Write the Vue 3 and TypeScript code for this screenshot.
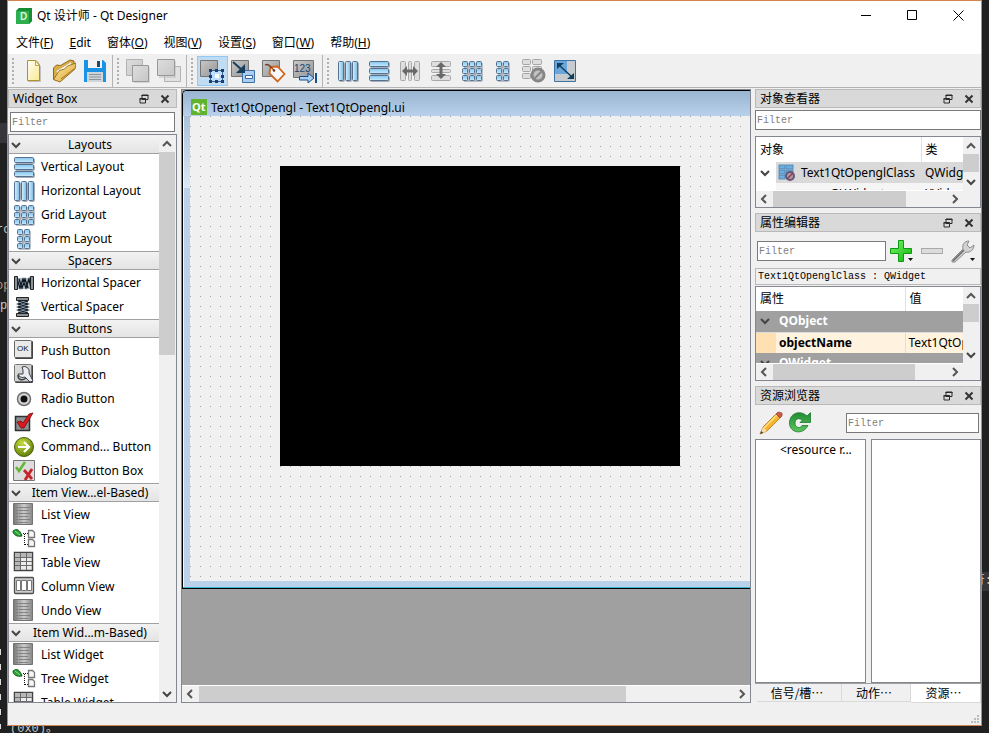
<script setup lang="ts">
import { ref } from 'vue'

interface MenuEntry { before: string; key: string; after: string }
interface ToolEntry { icon: string; label: string; caption?: string; active?: boolean; disabled?: boolean }
interface WidgetEntry { icon: string; name: string; caption?: string }
interface WidgetGroup { title: string; items: WidgetEntry[] }

const menus: MenuEntry[] = [
  { before: '文件(', key: 'F', after: ')' },
  { before: '', key: 'E', after: 'dit' },
  { before: '窗体(', key: 'O', after: ')' },
  { before: '视图(', key: 'V', after: ')' },
  { before: '设置(', key: 'S', after: ')' },
  { before: '窗口(', key: 'W', after: ')' },
  { before: '帮助(', key: 'H', after: ')' },
]

const toolbars: ToolEntry[][] = [
  [
    { icon: 'new', label: 'New' },
    { icon: 'open', label: 'Open' },
    { icon: 'save', label: 'Save' },
  ],
  [
    { icon: 'lower', label: 'Send to Back', disabled: true },
    { icon: 'raise', label: 'Bring to Front', disabled: true },
  ],
  [
    { icon: 'edit-widgets', label: 'Edit Widgets', active: true },
    { icon: 'edit-signals', label: 'Edit Signals/Slots' },
    { icon: 'edit-buddies', label: 'Edit Buddies' },
    { icon: 'edit-taborder', label: 'Edit Tab Order', caption: '123' },
  ],
  [
    { icon: 'hlayout', label: 'Lay Out Horizontally' },
    { icon: 'vlayout', label: 'Lay Out Vertically' },
    { icon: 'hsplit', label: 'Horizontal Splitter', disabled: true },
    { icon: 'vsplit', label: 'Vertical Splitter', disabled: true },
    { icon: 'grid', label: 'Lay Out in a Grid' },
    { icon: 'form', label: 'Lay Out in a Form' },
    { icon: 'break', label: 'Break Layout', disabled: true },
    { icon: 'adjust', label: 'Adjust Size' },
  ],
]

const groups: WidgetGroup[] = [
  {
    title: 'Layouts',
    items: [
      { icon: 'vlayout', name: 'Vertical Layout' },
      { icon: 'hlayout', name: 'Horizontal Layout' },
      { icon: 'grid', name: 'Grid Layout' },
      { icon: 'form', name: 'Form Layout' },
    ],
  },
  {
    title: 'Spacers',
    items: [
      { icon: 'hspacer', name: 'Horizontal Spacer' },
      { icon: 'vspacer', name: 'Vertical Spacer' },
    ],
  },
  {
    title: 'Buttons',
    items: [
      { icon: 'push', name: 'Push Button', caption: 'OK' },
      { icon: 'tool', name: 'Tool Button' },
      { icon: 'radio', name: 'Radio Button' },
      { icon: 'check', name: 'Check Box' },
      { icon: 'command', name: 'Command... Button' },
      { icon: 'dialog', name: 'Dialog Button Box' },
    ],
  },
  {
    title: 'Item View...el-Based)',
    items: [
      { icon: 'list', name: 'List View' },
      { icon: 'tree', name: 'Tree View' },
      { icon: 'table', name: 'Table View' },
      { icon: 'column', name: 'Column View' },
      { icon: 'list', name: 'Undo View' },
    ],
  },
  {
    title: 'Item Wid...m-Based)',
    items: [
      { icon: 'list', name: 'List Widget' },
      { icon: 'tree', name: 'Tree Widget' },
      { icon: 'table', name: 'Table Widget' },
    ],
  },
]

const tabs = ['信号/槽…', '动作…', '资源…']
const activeTab = ref(2)
const widgetFilter = ref('')
const objectFilter = ref('')
const propertyFilter = ref('')
const resourceFilter = ref('')
</script>

<template>
  <div class="desktop">
    <div class="backdrop" aria-hidden="true">
      <span class="band"></span>
      <span class="code code-a">rc</span>
      <span class="code code-b">op</span>
      <span class="code code-c">p</span>
      <span class="marks"></span>
      <span class="code code-d">(0x0)。</span>
      <span class="rband"></span>
      <span class="code code-e">符:</span>
    </div>

    <svg class="sprite" aria-hidden="true">
      <defs>
        <linearGradient id="blueH" x1="0" y1="0" x2="1" y2="0">
          <stop offset="0" stop-color="#d9f3ff" /><stop offset="1" stop-color="#7cbbe4" />
        </linearGradient>
        <linearGradient id="blueV" x1="0" y1="0" x2="0" y2="1">
          <stop offset="0" stop-color="#84c5ec" /><stop offset="1" stop-color="#c8ebff" />
        </linearGradient>
        <linearGradient id="greyD" x1="0" y1="0" x2="1" y2="1">
          <stop offset="0" stop-color="#c9c9c9" /><stop offset="1" stop-color="#939393" />
        </linearGradient>
        <linearGradient id="lightD" x1="0" y1="0" x2="1" y2="1">
          <stop offset="0" stop-color="#dedede" /><stop offset="1" stop-color="#c6c6c6" />
        </linearGradient>
        <linearGradient id="cream" x1="0" y1="0" x2="1" y2="1">
          <stop offset="0" stop-color="#fffef4" /><stop offset="1" stop-color="#fbe88f" />
        </linearGradient>
        <linearGradient id="gold" x1="0" y1="0" x2="1" y2="1">
          <stop offset="0" stop-color="#fdeeb0" /><stop offset="1" stop-color="#dc9f27" />
        </linearGradient>
        <linearGradient id="listG" x1="0" y1="0" x2="1" y2="0">
          <stop offset="0" stop-color="#777" /><stop offset=".55" stop-color="#ccc" /><stop offset="1" stop-color="#858585" />
        </linearGradient>
        <linearGradient id="green" x1="0" y1="0" x2="1" y2="1">
          <stop offset="0" stop-color="#7df36a" /><stop offset="1" stop-color="#0cb40c" />
        </linearGradient>
        <linearGradient id="reload" x1="0" y1="0" x2="0" y2="1">
          <stop offset="0" stop-color="#1f8a32" /><stop offset="1" stop-color="#5cc65e" />
        </linearGradient>
        <radialGradient id="lime" cx=".4" cy=".3" r=".75">
          <stop offset="0" stop-color="#c3dc3c" /><stop offset="1" stop-color="#5d7c05" />
        </radialGradient>
      </defs>

      <symbol id="i-new" viewBox="0 0 24 24">
        <path d="M7 2.500h10l3 5V23H7z" fill="#777" opacity=".4" />
        <path d="M6.500 1.500h8.500l3.500 4.500v15.500h-12z" fill="url(#cream)" stroke="#b38f2f" />
        <path d="M14.500 1.500v5h4z" fill="#fffbe0" stroke="#c3a34b" />
      </symbol>
      <symbol id="i-open" viewBox="0 0 24 24">
        <path d="M1.500 20.500V9l3-3 4 .5L18 1l4 1v6L9 22z" fill="#d9ad3f" stroke="#8f671b" />
        <path d="M4 12 19 3l1 3L7 17z" fill="#fffdf2" stroke="#b9a577" stroke-width=".7" />
        <path d="m1.500 20.500 6-9 5-1.500 3-3 8.500-3-1 6L8 23z" fill="url(#gold)" stroke="#9b711f" />
        <path d="M9 20 22 10" stroke="#a3751b" />
      </symbol>
      <symbol id="i-save" viewBox="0 0 24 24">
        <path d="M1 1h19l3 3v19H1z" fill="#1893e6" />
        <path d="M5 1h14v8H5z" fill="#f4f4f4" /><path d="M14 2h3v6h-3z" fill="#24486a" />
        <path d="M4 13h16v10H4z" fill="#d1d5d8" />
        <path d="M6 15.500h12M6 18h12M6 20.500h12" stroke="#8a949c" />
      </symbol>
      <symbol id="i-lower" viewBox="0 0 24 24">
        <path d="M.500.500h16v16h-16z" fill="url(#lightD)" stroke="#b2b2b2" />
        <path d="M8 8h17v17H8z" fill="#bbb" opacity=".5" />
        <path d="M6.500 6.500h16v16h-16z" fill="url(#lightD)" stroke="#989898" />
      </symbol>
      <symbol id="i-raise" viewBox="0 0 24 24">
        <path d="M7.500 7.500h16v15h-16z" fill="#e2e2e2" stroke="#b2b2b2" />
        <path d="M2 2h17v17H2z" fill="#bbb" opacity=".5" />
        <path d="M.500.500h17v16h-17z" fill="url(#lightD)" stroke="#989898" />
      </symbol>
      <symbol id="i-edit-widgets" viewBox="0 0 24 24">
        <path d="M.500 1.500h17v16h-17z" fill="url(#greyD)" stroke="#747474" />
        <path d="M10.500 11.500h12v11h-12z" fill="#bedcfc" stroke="#3a6596" />
        <path d="M9 10h3v3H9zM15 10h3v3h-3zM21 10h3v3h-3zM9 16h3v3H9zM21 16h3v3h-3zM9 21h3v3H9zM15 21h3v3h-3zM21 21h3v3h-3z" fill="#1c3e6e" />
        <path d="M15 15h4v4h-4z" fill="#fff" />
      </symbol>
      <symbol id="i-edit-signals" viewBox="0 0 24 24">
        <path d="M.500 1.500h17v16h-17z" fill="url(#greyD)" stroke="#747474" />
        <path d="M11.500 11.500h12v12h-12z" fill="#a9cdf3" stroke="#416f9e" />
        <path d="M14.500 16.500h7v3h-7z" fill="#fff" stroke="#376799" />
        <path d="m2 3 9 8" stroke="#173e5c" stroke-width="2" /><path d="M14 5v9H5z" fill="#173e5c" />
      </symbol>
      <symbol id="i-edit-buddies" viewBox="0 0 24 24">
        <path d="M.500 1.500h17v16h-17z" fill="url(#greyD)" stroke="#747474" />
        <path d="m8.500 8 7-.5 7 7.500-7 7.500-8-8z" fill="#f8f8ff" stroke="#d0661c" stroke-width="1.800" />
        <circle cx="12" cy="11.500" r="1.300" fill="#78350b" /><path d="M3 6c4-2 5 2 9 5" fill="none" stroke="#743a1b" stroke-width="1.300" />
      </symbol>
      <symbol id="i-edit-taborder" viewBox="0 0 24 24">
        <path d="M.500 1.500h20v17h-20z" fill="url(#greyD)" stroke="#747474" />
        <path d="M6.500 17.500H15V14l6 5-6 5v-3H6.500z" fill="#a8d0f7" stroke="#174f87" /><path d="M23 14v10" stroke="#174f87" stroke-width="2" />
      </symbol>
      <symbol id="i-hlayout" viewBox="0 0 24 24">
        <g fill="none" stroke="#a7adb5" stroke-width="2"><rect x="4" y="4" width="4" height="18" rx="1" /><rect x="11" y="4" width="4" height="18" rx="1" /><rect x="18" y="4" width="4" height="18" rx="1" /></g>
        <g fill="url(#blueH)" stroke="#56708f"><rect x="2.500" y="2.500" width="5" height="19" rx="1" /><rect x="9.500" y="2.500" width="5" height="19" rx="1" /><rect x="16.500" y="2.500" width="5" height="19" rx="1" /></g>
      </symbol>
      <symbol id="i-vlayout" viewBox="0 0 24 24">
        <g fill="none" stroke="#a7adb5" stroke-width="2"><rect x="4" y="4" width="18" height="4" rx="1" /><rect x="4" y="11" width="18" height="4" rx="1" /><rect x="4" y="18" width="18" height="4" rx="1" /></g>
        <g fill="url(#blueV)" stroke="#56708f"><rect x="2.500" y="2.500" width="19" height="5" rx="1" /><rect x="2.500" y="9.500" width="19" height="5" rx="1" /><rect x="2.500" y="16.500" width="19" height="5" rx="1" /></g>
      </symbol>
      <symbol id="i-hsplit" viewBox="0 0 24 24">
        <g fill="#dedede" stroke="#a8a8a8"><rect x="2.500" y="2.500" width="5" height="19" rx="1" /><rect x="16.500" y="2.500" width="5" height="19" rx="1" /><rect x="10.500" y="2.500" width="3" height="19" rx="1" /></g>
        <path d="m4 12 5-5v3.500h6V7l5 5-5 5v-3.500H9V17z" fill="#696969" />
      </symbol>
      <symbol id="i-vsplit" viewBox="0 0 24 24">
        <g fill="#dedede" stroke="#a8a8a8"><rect x="2.500" y="2.500" width="19" height="5" rx="1" /><rect x="2.500" y="16.500" width="19" height="5" rx="1" /><rect x="2.500" y="10.500" width="19" height="3" rx="1" /></g>
        <path d="m12 3 5 5h-3.500v7H17l-5 5-5-5h3.500V8H7z" fill="#696969" />
      </symbol>
      <symbol id="i-grid" viewBox="0 0 24 24">
        <path d="M4 8h18M4 15h18M4 22h18M8 4v18M15 4v18M22 4v18" stroke="#a7adb5" stroke-width="1.500" />
        <g fill="url(#blueV)" stroke="#56708f">
          <rect x="2.500" y="2.500" width="5" height="5" rx="1" /><rect x="9.500" y="2.500" width="5" height="5" rx="1" /><rect x="16.500" y="2.500" width="5" height="5" rx="1" />
          <rect x="2.500" y="9.500" width="5" height="5" rx="1" /><rect x="9.500" y="9.500" width="5" height="5" rx="1" /><rect x="16.500" y="9.500" width="5" height="5" rx="1" />
          <rect x="2.500" y="16.500" width="5" height="5" rx="1" /><rect x="9.500" y="16.500" width="5" height="5" rx="1" /><rect x="16.500" y="16.500" width="5" height="5" rx="1" />
        </g>
      </symbol>
      <symbol id="i-form" viewBox="0 0 24 24">
        <path d="M7 8h11M7 15h11M7 22h11M11 4v18M18 4v18" stroke="#a7adb5" stroke-width="1.500" />
        <g fill="url(#blueV)" stroke="#56708f">
          <rect x="5.500" y="2.500" width="5" height="5" rx="1" /><rect x="12.500" y="2.500" width="5" height="5" rx="1" />
          <rect x="5.500" y="9.500" width="5" height="5" rx="1" /><rect x="12.500" y="9.500" width="5" height="5" rx="1" />
          <rect x="5.500" y="16.500" width="5" height="5" rx="1" /><rect x="12.500" y="16.500" width="5" height="5" rx="1" />
        </g>
      </symbol>
      <symbol id="i-break" viewBox="0 0 24 24">
        <g fill="#dedede" stroke="#a5a5a5"><rect x=".500" y=".500" width="8" height="5" rx="1" /><rect x="10.500" y=".500" width="9" height="5" rx="1" /><rect x=".500" y="7.500" width="8" height="5" rx="1" /><rect x="10.500" y="7.500" width="9" height="5" rx="1" /><rect x=".500" y="14.500" width="8" height="5" rx="1" /></g>
        <circle cx="16" cy="16" r="6" fill="#c3c3c3" stroke="#868686" stroke-width="3" /><path d="m12 20 8-8" stroke="#868686" stroke-width="2" />
      </symbol>
      <symbol id="i-adjust" viewBox="0 0 24 24">
        <path d="M1.500 1.500h21v21h-21z" fill="#c6cbd0" stroke="#3e73a3" /><path d="M2 2h12v13H2z" fill="#6ba6da" />
        <path d="m6 6 13 12" stroke="#103e5c" stroke-width="1.500" /><path d="M4 4h7l-7 6zM21 20h-7l7-6z" fill="#103e5c" />
      </symbol>

      <symbol id="i-hspacer" viewBox="0 0 24 24">
        <path d="M5 7h14v11H5z" fill="#9fb4c6" /><path d="m5 8 3 9 3-9 3 9 3-9 2 9M7 8l3 9 3-9 3 9" fill="none" stroke="#10151b" stroke-width="1.300" />
        <path d="M2.500 5.500h3v13h-3zM18.500 5.500h3v13h-3z" fill="#8b9196" stroke="#222" />
      </symbol>
      <symbol id="i-vspacer" viewBox="0 0 24 24">
        <path d="M6 5h10v14H6z" fill="#9db8cd" /><path d="m6 6 10 3-10 3 10 3-10 3M16 6 6 9l10 3-10 3 10 3" fill="none" stroke="#10151b" stroke-width="1.200" />
        <path d="M4.500 2.500h12v3h-12zM4.500 18.500h12v3h-12z" fill="#8b9196" stroke="#222" />
      </symbol>
      <symbol id="i-push" viewBox="0 0 24 24">
        <rect x="3" y="2" width="18" height="18" rx="1" fill="#444" /><rect x="2.500" y="1.500" width="17" height="17" rx="1" fill="#e9e9e9" stroke="#686868" />
      </symbol>
      <symbol id="i-tool" viewBox="0 0 24 24">
        <rect x="3" y="2" width="18" height="18" rx="1" fill="#444" /><rect x="2.500" y="1.500" width="17" height="17" rx="1" fill="url(#lightD)" stroke="#777" />
        <path d="M10 4a5 5 0 0 1 7 6l4 8-3 1-5-5a5 5 0 0 1-7-3h5V7z" fill="#e9edf1" stroke="#3d4147" />
        <path d="M6 12c0 5 4 6 8 3" fill="none" stroke="#3d4147" stroke-width="1.500" />
      </symbol>
      <symbol id="i-radio" viewBox="0 0 24 24">
        <circle cx="12" cy="12" r="6.500" fill="#d4d4d4" stroke="#707070" stroke-width="1.500" /><circle cx="12" cy="12" r="3.500" fill="#111" />
      </symbol>
      <symbol id="i-check" viewBox="0 0 24 24">
        <path d="M3.500 5.500h14v14h-14z" fill="#8b8f91" stroke="#2d3032" stroke-width="1.500" /><path d="m5 11 4-1 2 2 6-9 4-1-9 15H9z" fill="#d8191e" stroke="#7f080c" stroke-width=".800" />
      </symbol>
      <symbol id="i-command" viewBox="0 0 24 24">
        <circle cx="12" cy="12" r="9.500" fill="url(#lime)" stroke="#4c5e0a" /><path d="M6 12h11M12 7l5 5-5 5" fill="none" stroke="#fff" stroke-width="2.200" />
      </symbol>
      <symbol id="i-dialog" viewBox="0 0 24 24">
        <path d="M1.500 1.500h21v20h-21z" fill="#ddd" stroke="#777" /><path d="m4 8 3 4 6-9" fill="none" stroke="#61b836" stroke-width="2.500" /><path d="m12 11 8 9M20 10l-7 11" stroke="#c7242c" stroke-width="2.800" />
      </symbol>
      <symbol id="i-list" viewBox="0 0 24 24">
        <path d="M1.500.500h19v21h-19z" fill="url(#listG)" stroke="#737373" />
        <path d="M4 4.500h2M7 4.500h11M4 7.500h2M7 7.500h10M4 10.500h2M7 10.500h11M4 13.500h2M7 13.500h9M4 16.500h2M7 16.500h11M4 19.500h2M7 19.500h9" stroke="#747474" stroke-width=".800" />
      </symbol>
      <symbol id="i-tree" viewBox="0 0 24 24">
        <path d="M1 4c4-3 7-1 9 5-5 1-9-1-9-5z" fill="#2d9f39" stroke="#155f20" /><path d="m3 4 5 4" stroke="#8ae183" />
        <path d="M11 6.500h5M12.500 7v11M13 17.500h3" stroke="#111" stroke-dasharray="1 1" />
        <path d="M16.500 3.500h4l2 2v5h-6zM16.500 12.500h4l2 2v5h-6z" fill="#f7f7f7" stroke="#777" stroke-width="1.300" />
      </symbol>
      <symbol id="i-table" viewBox="0 0 24 24">
        <path d="M2.500 1.500h18v18h-18z" fill="#ededed" stroke="#444" stroke-width="1.500" /><path d="M3 2h5v17H3zM3 2h17v4H3z" fill="#b7b7b7" />
        <path d="M3 6.500h17M3 10.500h17M3 14.500h17M8.500 2v17M14.500 2v17" stroke="#6b6b6b" />
      </symbol>
      <symbol id="i-column" viewBox="0 0 24 24">
        <rect x="2.500" y="2.500" width="19" height="16" rx="1" fill="#ccc" stroke="#505050" stroke-width="1.300" /><path d="M4.500 5.500h4v10h-4zM9.500 5.500h5v10h-5zM15.500 5.500h4v10h-4z" fill="#fff" stroke="#777" />
      </symbol>

      <symbol id="i-class" viewBox="0 0 18 18">
        <g fill="#6aaee0" stroke="#4980ad" stroke-width=".800"><rect x="1" y="1" width="6" height="4" /><rect x="8" y="1" width="7" height="4" /><rect x="1" y="6" width="6" height="4" /><rect x="8" y="6" width="7" height="4" /><rect x="1" y="11" width="6" height="4" /></g>
        <circle cx="12" cy="12" r="4" fill="#af98a8" stroke="#665875" stroke-width="2" /><path d="m9 15 6-6" stroke="#8a3e51" stroke-width="1.500" />
      </symbol>
      <symbol id="i-float" viewBox="0 0 10 10"><path d="M3 1h6v4.500H3zM1 4.500h5.500V9H1z" fill="#d9d9d9" stroke="#2b2b2b" /><path d="M2.500 1.500h7M.500 5h6.500" stroke="#2b2b2b" /></symbol>
      <symbol id="i-shut" viewBox="0 0 10 10"><path d="m1.500 1.500 7 7M8.500 1.500l-7 7" stroke="#333" stroke-width="2" /></symbol>
      <symbol id="i-up" viewBox="0 0 10 10"><path d="m1 7 4-4 4 4" fill="none" stroke="#555" stroke-width="2" /></symbol>
      <symbol id="i-down" viewBox="0 0 10 10"><path d="m1 3 4 4 4-4" fill="none" stroke="#444" stroke-width="2" /></symbol>
      <symbol id="i-left" viewBox="0 0 10 10"><path d="m7 1-4 4 4 4" fill="none" stroke="#555" stroke-width="2" /></symbol>
      <symbol id="i-right" viewBox="0 0 10 10"><path d="m3 1 4 4-4 4" fill="none" stroke="#555" stroke-width="2" /></symbol>
    </svg>

    <main class="window">
      <header class="titlebar">
        <svg class="logo" viewBox="0 0 16 16" aria-hidden="true">
          <path d="M3 0h13v13l-3 3H0V3z" fill="#2fae4d" /><path d="M0 3l3-3h13l-3 3zM13 3l3-3v13l-3 3z" fill="#168d35" />
          <text x="4" y="12" font-family="Liberation Sans" font-size="10" font-weight="700" fill="#d8f6dc">D</text>
        </svg>
        <h1>Qt 设计师 - Qt Designer</h1>
        <div class="window-buttons">
          <button type="button" aria-label="Minimize"><svg viewBox="0 0 11 11"><path d="M0 5.500h10" /></svg></button>
          <button type="button" aria-label="Maximize"><svg viewBox="0 0 11 11"><path d="M.500.500h9v9h-9z" /></svg></button>
          <button type="button" aria-label="Close"><svg viewBox="0 0 11 11"><path d="m.500.500 10 10M10.500.500l-10 10" /></svg></button>
        </div>
      </header>

      <nav class="menubar">
        <button v-for="m in menus" :key="m.key" type="button">{{ m.before }}<u>{{ m.key }}</u>{{ m.after }}</button>
      </nav>

      <div class="toolbars">
        <div v-for="(bar, i) in toolbars" :key="i" class="toolbar" role="toolbar">
          <span class="handle"></span>
          <button
            v-for="t in bar"
            :key="t.icon"
            type="button"
            :class="{ active: t.active }"
            :disabled="t.disabled"
            :aria-label="t.label"
          >
            <svg>
              <use :href="'#i-' + t.icon" />
              <text v-if="t.caption" class="order-caption" x="1" y="13">{{ t.caption }}</text>
            </svg>
          </button>
        </div>
      </div>

      <div class="workspace">
        <aside class="dock dock-left">
          <div class="dock-title">
            <h2>Widget Box</h2>
            <button type="button" aria-label="Float"><svg><use href="#i-float" /></svg></button>
            <button type="button" aria-label="Close"><svg><use href="#i-shut" /></svg></button>
          </div>
          <div class="widget-filter">
            <input v-model="widgetFilter" class="field" type="text" placeholder="Filter" aria-label="Widget filter" />
          </div>
          <div class="frame widget-tree">
            <div class="widget-list">
              <section v-for="g in groups" :key="g.title">
                <h3>
                  <svg><use href="#i-down" /></svg>
                  <span>{{ g.title }}</span>
                </h3>
                <ul>
                  <li v-for="w in g.items" :key="w.name">
                    <svg>
                      <use :href="'#i-' + w.icon" />
                      <text v-if="w.caption" class="push-caption" x="5" y="12">{{ w.caption }}</text>
                    </svg>{{ w.name }}
                  </li>
                </ul>
              </section>
            </div>
            <div class="vbar">
              <button type="button" aria-label="Scroll up"><svg><use href="#i-up" /></svg></button>
              <div class="track"><span class="thumb thumb-widgets"></span></div>
              <button type="button" aria-label="Scroll down"><svg><use href="#i-down" /></svg></button>
            </div>
          </div>
        </aside>

        <section class="mdi frame">
          <div class="mdi-view">
            <article class="subwindow">
              <header>
                <svg viewBox="0 0 16 16" aria-hidden="true">
                  <path d="M0 0h16v16H0z" fill="#62b32c" />
                  <text x="1" y="12" font-family="Open Sans" font-size="11" font-weight="700" fill="#fff">Qt</text>
                </svg>
                <span>Text1QtOpengl - Text1QtOpengl.ui</span>
              </header>
              <div class="form"><div class="gl-view"></div></div>
            </article>
          </div>
          <div class="hbar mdi-bar">
            <button type="button" aria-label="Scroll left"><svg><use href="#i-left" /></svg></button>
            <div class="track"><span class="thumb thumb-mdi"></span></div>
            <button type="button" aria-label="Scroll right"><svg><use href="#i-right" /></svg></button>
          </div>
        </section>

        <aside class="dock dock-right">
          <div class="dock-title">
            <h2>对象查看器</h2>
            <button type="button" aria-label="Float"><svg><use href="#i-float" /></svg></button>
            <button type="button" aria-label="Close"><svg><use href="#i-shut" /></svg></button>
          </div>
          <input v-model="objectFilter" class="field object-filter" type="text" placeholder="Filter" aria-label="Object filter" />
          <div class="frame scroller objects">
            <div class="clip">
              <table>
                <colgroup><col class="c-arrow" /><col class="c-object" /><col class="c-class" /></colgroup>
                <thead><tr><th colspan="2">对象</th><th class="split">类</th></tr></thead>
                <tbody>
                  <tr class="selected">
                    <td><svg class="arrow"><use href="#i-down" /></svg></td>
                    <td><div class="object-name"><svg class="class-icon"><use href="#i-class" /></svg>Text1QtOpenglClass</div></td>
                    <td class="type">QWidget</td>
                  </tr>
                  <tr class="alt"><td></td><td><div class="object-child">GLWidget</div></td><td class="type">XVideoWidget</td></tr>
                </tbody>
              </table>
            </div>
            <div class="vbar">
              <button type="button" aria-label="Scroll up"><svg><use href="#i-up" /></svg></button>
              <div class="track"><span class="thumb thumb-short"></span></div>
              <button type="button" aria-label="Scroll down"><svg><use href="#i-down" /></svg></button>
            </div>
            <div class="hbar">
              <button type="button" aria-label="Scroll left"><svg><use href="#i-left" /></svg></button>
              <div class="track"><span class="thumb thumb-objects"></span></div>
              <button type="button" aria-label="Scroll right"><svg><use href="#i-right" /></svg></button>
            </div>
          </div>

          <div class="dock-title spaced">
            <h2>属性编辑器</h2>
            <button type="button" aria-label="Float"><svg><use href="#i-float" /></svg></button>
            <button type="button" aria-label="Close"><svg><use href="#i-shut" /></svg></button>
          </div>
          <div class="property-tools">
            <input v-model="propertyFilter" class="field" type="text" placeholder="Filter" aria-label="Property filter" />
            <div class="property-buttons">
              <button type="button" aria-label="Add property">
                <svg viewBox="0 0 26 26"><path d="M10.500 2.500h5v8h8v5h-8v8h-5v-8h-8v-5h8z" fill="url(#green)" stroke="#0c9b10" /><path d="M20 20h5l-2.500 3z" fill="#111" /></svg>
              </button>
              <button type="button" aria-label="Remove property">
                <svg viewBox="0 0 26 26"><rect x="2.500" y="10.500" width="21" height="5" fill="#dcdcdc" stroke="#a9a9a9" /></svg>
              </button>
              <button type="button" aria-label="Configure">
                <svg viewBox="0 0 26 26"><path d="m2 22 11-11c-1-4 1-8 6-8l-2 4 3 3 4-3c0 5-4 8-8 7L5 24H2z" fill="#d2d2d2" stroke="#8a8a8a" /><path d="m3 23 11-11" stroke="#666" stroke-width="1.500" /><path d="M20 20h5l-2.500 3z" fill="#111" /></svg>
              </button>
            </div>
          </div>
          <div class="class-label">Text1QtOpenglClass : QWidget</div>
          <div class="frame scroller properties">
            <div class="clip">
              <table>
                <colgroup><col class="c-indent" /><col class="c-prop" /><col class="c-value" /></colgroup>
                <thead><tr><th colspan="2">属性</th><th class="split">值</th></tr></thead>
                <tbody>
                  <tr class="group"><td><svg class="arrow"><use href="#i-down" /></svg></td><td colspan="2">QObject</td></tr>
                  <tr class="prop"><td class="indent"></td><td><b>objectName</b></td><td class="split">Text1QtOpenglClass</td></tr>
                  <tr class="group"><td><svg class="arrow"><use href="#i-down" /></svg></td><td colspan="2">QWidget</td></tr>
                </tbody>
              </table>
            </div>
            <div class="vbar">
              <button type="button" aria-label="Scroll up"><svg><use href="#i-up" /></svg></button>
              <div class="track"><span class="thumb thumb-short"></span></div>
              <button type="button" aria-label="Scroll down"><svg><use href="#i-down" /></svg></button>
            </div>
            <div class="hbar">
              <button type="button" aria-label="Scroll left"><svg><use href="#i-left" /></svg></button>
              <div class="track"><span class="thumb thumb-props"></span></div>
              <button type="button" aria-label="Scroll right"><svg><use href="#i-right" /></svg></button>
            </div>
          </div>

          <div class="dock-title spaced">
            <h2>资源浏览器</h2>
            <button type="button" aria-label="Float"><svg><use href="#i-float" /></svg></button>
            <button type="button" aria-label="Close"><svg><use href="#i-shut" /></svg></button>
          </div>
          <div class="resource-tools">
            <button type="button" aria-label="Edit resources">
              <svg viewBox="0 0 24 24"><path d="m1 23 3-7L17 3l4 4L8 20z" fill="#f5b52c" stroke="#b47718" stroke-width=".800" /><path d="M5 17 18 4" stroke="#ffe28a" stroke-width="1.500" /><path d="m17 3 2-2 4 1v3l-2 2z" fill="#cf5b45" stroke="#9f4537" stroke-width=".800" /><path d="m1 23 3-7 4 4z" fill="#f3dcae" /><path d="m1 23 1.500-3 1.500 2z" fill="#333" /></svg>
            </button>
            <button type="button" aria-label="Reload">
              <svg viewBox="0 0 24 24"><path d="M20 14.500h-6c-1 3-7 3-7-2.500s6-5 7-2.500L12 11.500h10.500V1.500L19 5C12-1.500 1.500 2 1.500 12S15 24.500 20 14.500z" fill="url(#reload)" stroke="#1c7a2b" stroke-width=".800" /></svg>
            </button>
            <input v-model="resourceFilter" class="field" type="text" placeholder="Filter" aria-label="Resource filter" />
          </div>
          <div class="resource-panes">
            <div class="frame pane"><span>&lt;resource r...</span></div>
            <div class="frame pane"></div>
          </div>
          <div class="tabs" role="tablist">
            <button
              v-for="(t, i) in tabs"
              :key="t"
              type="button"
              role="tab"
              :aria-selected="activeTab === i"
              :class="{ current: activeTab === i }"
              @click="activeTab = i"
            >{{ t }}</button>
          </div>
        </aside>
      </div>

      <footer class="statusbar">
        <svg viewBox="0 0 9 9" aria-hidden="true"><path d="M7 1h2v2H7zM7 4h2v2H7zM7 7h2v2H7zM4 4h2v2H4zM4 7h2v2H4zM1 7h2v2H1z" fill="#bcbcbc" /></svg>
      </footer>
    </main>
  </div>
</template>

<style>
body {
  margin: 0;
  background: #202020;
}
</style>

<style scoped>
* {
  box-sizing: border-box;
}

.desktop {
  position: relative;
  display: flex;
  height: 100vh;
  min-height: 640px;
  padding: 0 7px 7px;
  overflow: hidden;
  background: #202020;
  color: #000;
  font: 12px/16px "Noto Sans", "Noto Sans CJK SC", sans-serif;
}

.backdrop {
  position: absolute;
  inset: 0;
  color: #c8c8c8;
}

.backdrop span {
  position: absolute;
  white-space: nowrap;
}

.code {
  left: 0;
  font: 12px/16px "Liberation Mono", "Noto Sans CJK SC", monospace;
}

.band { left: 0; top: 123px; width: 7px; height: 20px; background: #35353a; }
.code-a { top: 222px; left: -4px; }
.code-b { top: 278px; left: -4px; color: #b59a7a; }
.code-c { top: 298px; }
.code-d { left: 10px; bottom: -4px; }
.code-e { left: auto; right: -3px; top: 573px; }
.rband { right: 0; top: 572px; width: 7px; height: 19px; background: #35353a; }
.marks {
  left: 0;
  top: 649px;
  width: 1px;
  height: 80px;
  background: repeating-linear-gradient(#ddd 0 6px, transparent 6px 15px);
}

.sprite {
  position: absolute;
  width: 0;
  height: 0;
}

.order-caption { font: 10px "Liberation Sans", sans-serif; fill: #164676; }
.push-caption { font: 8px "Liberation Sans", sans-serif; fill: #111; }

.window {
  position: relative;
  display: flex;
  flex: 1;
  flex-direction: column;
  min-width: 0;
  border: 1px solid #d2834f;
  background: #f0f0f0;
}

button {
  display: flex;
  align-items: center;
  justify-content: center;
  padding: 0;
  border: 0;
  background: none;
  color: inherit;
  font: inherit;
}

h1, h2, h3, ul {
  margin: 0;
  padding: 0;
  font: inherit;
  list-style: none;
}

.titlebar {
  display: flex;
  align-items: center;
  height: 29px;
  padding-left: 8px;
  background: #fff;
}

.titlebar .logo {
  width: 16px;
  height: 16px;
  margin-right: 5px;
}

.titlebar h1 { flex: 1; }
.window-buttons { display: flex; height: 100%; }
.window-buttons button { width: 46px; }
.window-buttons svg { width: 11px; height: 11px; fill: none; stroke: #000; }

.menubar {
  display: flex;
  gap: 16px;
  height: 25px;
  padding: 2px 0 0 8px;
  border-bottom: 1px solid #f0f0f0;
  background: #fff;
}

.toolbars {
  display: flex;
  height: 33px;
  border-bottom: 1px solid #b4b4b4;
}

.toolbar {
  display: flex;
  align-items: center;
  padding: 0 1px 0 4px;
  border-right: 1px solid #b4b4b4;
}

.toolbar:last-child { border-right: 0; }

.handle {
  width: 2px;
  height: 26px;
  margin-right: 4px;
  background: repeating-linear-gradient(#b0b0b0 0 2px, transparent 2px 4px);
}

.toolbar button {
  width: 31px;
  height: 30px;
  padding-right: 1px;
}

.toolbar button.active {
  background: #c0dcf3;
  box-shadow: inset 0 0 0 1px #90c8f6;
}

.toolbar svg { width: 24px; height: 24px; }

.workspace {
  display: flex;
  flex: 1;
  gap: 4px;
  min-height: 0;
  padding-top: 1px;
}

.frame {
  border: 1px solid #828790;
  background: #fff;
}

.dock {
  display: flex;
  flex-direction: column;
  min-height: 0;
}

.dock-left { width: 169px; }
.dock-right { width: 226px; }

.dock-title {
  display: flex;
  flex-shrink: 0;
  align-items: center;
  height: 19px;
  padding: 1px 6px 0 4px;
  border: 1px solid #b9b9b9;
  background: #d9d9d9;
}

.dock-title h2 { flex: 1; }
.dock-title button { width: 10px; height: 10px; margin-left: 11px; }
.dock-title svg { width: 10px; height: 10px; }
.spaced { margin-top: 5px; }

.field {
  display: block;
  width: 100%;
  height: 20px;
  padding: 1px 1px 0;
  border: 1px solid #7a7a7a;
  border-radius: 0;
  outline: 0;
  background: #fff;
  color: #000;
  font: 10px/16px "Liberation Mono", "Noto Sans CJK SC", monospace;
}

.field::placeholder { color: #808080; opacity: 1; }

.widget-filter { padding: 4px 2px 2px; }

.widget-tree {
  display: flex;
  flex: 1;
  min-height: 0;
}

.widget-list {
  flex: 1;
  overflow: hidden;
}

.widget-list h3 {
  display: flex;
  align-items: center;
  height: 19px;
  margin-bottom: 1px;
  padding-left: 2px;
  border-top: 1px solid #a0a0a0;
  border-bottom: 1px solid #a0a0a0;
  background: linear-gradient(#f2f2f2, #e4e4e4);
}

.widget-list section:first-child h3 { border-top-color: #f0f0f0; }
.widget-list h3 svg { width: 10px; height: 10px; }
.widget-list h3 span { flex: 1; text-align: center; }

.widget-list li {
  display: flex;
  align-items: center;
  gap: 5px;
  height: 24px;
  padding-left: 3px;
  white-space: nowrap;
}

.widget-list li svg { width: 24px; height: 24px; }

.vbar {
  display: flex;
  flex-direction: column;
  width: 17px;
  border-right: 1px solid #f0f0f0;
  background: #f0f0f0;
}

.hbar {
  display: flex;
  height: 17px;
  border-top: 1px solid #fff;
  background: #f0f0f0;
}

.vbar button { height: 17px; }
.hbar button { width: 17px; }
.hbar button:first-child { padding-right: 1px; }
.vbar svg, .hbar svg { width: 10px; height: 10px; }
.track { flex: 1; min-width: 0; }
.thumb { display: block; background: #cdcdcd; }
.vbar .thumb { width: 100%; }
.hbar .thumb { height: 100%; }
.thumb-widgets { height: 38%; }
.thumb-mdi { width: 80%; }
.thumb-short { height: 18px; }
.thumb-objects { width: 77%; }
.thumb-props { width: 82%; }

.mdi {
  display: flex;
  flex: 1;
  flex-direction: column;
  min-width: 0;
  background: #a0a0a0;
}

.mdi-view {
  flex: 1;
  min-height: 0;
  overflow: hidden;
}

.subwindow {
  padding-bottom: 7px;
  border: 1px solid #000;
  border-right: 0;
  border-radius: 5px 0 0;
  background: linear-gradient(#99b4d1, #dce8f5 97px, #b9d1ea 97px);
  box-shadow: inset 0 -1px #3cb9cf, inset 1px 0 #f4f9ff;
}

.subwindow header {
  display: flex;
  align-items: center;
  gap: 4px;
  height: 25px;
  padding: 7px 0 0 8px;
  border-radius: 4px 0 0;
  background: linear-gradient(#99b4d1, #b9d1ea);
}

.subwindow header svg { width: 16px; height: 16px; }
.subwindow header span { padding-top: 1px; }

.form {
  margin-left: 7px;
  padding: 50px 70px 115px 90px;
  background: conic-gradient(from 0deg at 1px 1px, transparent 270deg, #a0a0a0 0) 0 0 / 10px 10px #f0f0f0;
}

.gl-view {
  height: 300px;
  background: #000;
}

.object-filter { margin-top: 2px; }

.scroller {
  display: grid;
  flex-shrink: 0;
  grid-template-rows: 1fr 17px;
  grid-template-columns: 1fr 17px;
  background: #f0f0f0;
}

.objects { height: 72px; margin-top: 6px; }
.properties { height: 95px; margin-top: 1px; }

.clip {
  overflow: hidden;
  background: #fff;
}

table {
  width: 280px;
  border-collapse: collapse;
  table-layout: fixed;
}

th, td { padding: 0; text-align: left; white-space: nowrap; }
th { height: 25px; padding-left: 4px; font-weight: 400; }
.properties th { height: 24px; }
th.split { border-left: 1px solid #e0e0e0; }
td { height: 21px; }
.c-arrow { width: 20px; }
.c-object { width: 145px; }
.c-indent { width: 20px; }
.c-prop { width: 129px; }
.arrow { display: block; width: 10px; height: 10px; margin-left: 4px; }

.selected td:not(:first-child) { background: #d9d9d9; }
.alt td:not(:first-child) { background: #f5f5f5; }
.type { padding-left: 4px; }

.object-name {
  display: flex;
  align-items: center;
  gap: 5px;
  padding-left: 2px;
}

.class-icon { width: 18px; height: 18px; }
.object-child { padding-left: 54px; }

.property-tools {
  display: flex;
  align-items: center;
  gap: 2px;
  height: 36px;
  padding: 2px 5px 0 2px;
}

.property-buttons { display: flex; gap: 5px; }
.property-tools .field { flex: 1; min-width: 0; }
.property-tools svg { display: block; width: 26px; height: 26px; }

.class-label {
  flex-shrink: 0;
  height: 17px;
  padding-left: 2px;
  border: 1px solid #b9b9b9;
  font: 10px/15px "Liberation Mono", monospace;
}

.group td {
  border-bottom: 1px solid #ddd;
  background: #a0a0a0;
  color: #fff;
  font-weight: 700;
}

.group td + td, .prop td + td { padding-left: 3px; }
.prop td { background: #fff2de; }
.prop .indent { background: #ffe0b3; }
.prop .split { border-left: 1px solid #ddd; }

.resource-tools {
  display: flex;
  align-items: center;
  gap: 5px;
  height: 34px;
  padding: 2px 2px 0 4px;
}

.resource-tools svg { display: block; width: 24px; height: 24px; }
.resource-tools .field { width: 133px; margin-left: auto; }

.resource-panes {
  display: grid;
  flex: 1;
  grid-template-columns: 111px 1fr;
  gap: 5px;
  min-height: 0;
}

.pane { padding: 2px 0 0 24px; white-space: nowrap; }

.tabs {
  display: grid;
  grid-template-columns: 85px 69px 1fr;
  height: 20px;
  padding-left: 2px;
  border-top: 1px solid #a0a0a0;
  font: 12px/16px "Noto Sans CJK SC", sans-serif;
}

.tabs button {
  height: 18px;
  padding-right: 4px;
  border: solid #d9d9d9;
  border-width: 0 1px 1px 0;
}

.tabs button.current { height: 19px; background: #fff; }

.statusbar {
  display: flex;
  align-items: flex-end;
  justify-content: flex-end;
  height: 22px;
  padding: 0 2px 2px;
}

.statusbar svg { width: 9px; height: 9px; }
</style>
